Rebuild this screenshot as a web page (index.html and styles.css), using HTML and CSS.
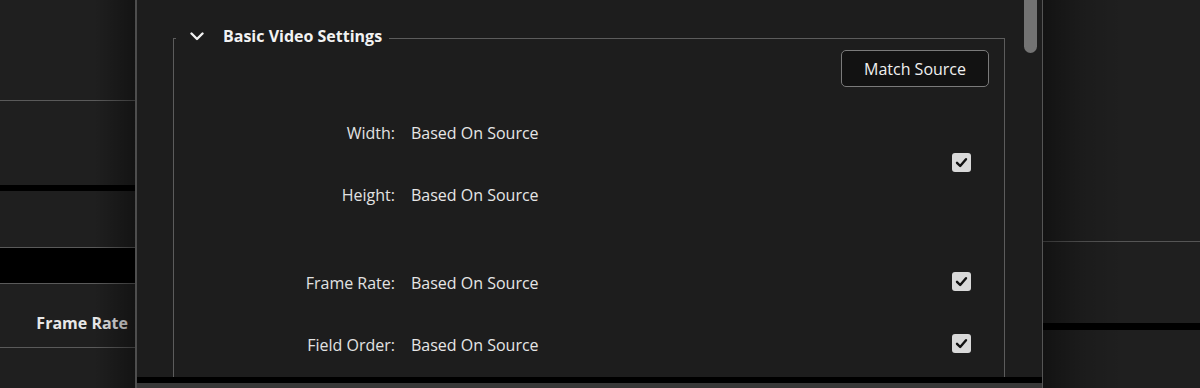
FILE: index.html
```html
<!DOCTYPE html>
<html lang="en">
<head>
  <meta charset="UTF-8">
  <title>Export Settings - Video</title>
  <link rel="stylesheet" href="styles.css">
</head>
<body>
  <div class="app">
    <aside class="side side-left">
      <div class="cell c1"></div>
      <div class="cell c2"></div>
      <div class="cell c3"></div>
      <div class="cell c4"></div>
      <div class="cell c5"><span class="side-label">Frame Rate</span></div>
      <div class="cell c6"></div>
    </aside>

    <section class="dialog">
      <div class="dialog-body">
        <div class="dialog-content">
          <fieldset class="group">
            <legend class="group-title">
              <svg class="chevron" width="14" height="9" viewBox="0 0 14 9">
                <polyline points="1.5,1.5 7,7 12.5,1.5" fill="none" stroke="#f2f2f2" stroke-width="2.4" stroke-linecap="round" stroke-linejoin="round"/>
              </svg>
              <span>Basic Video Settings</span>
            </legend>

            <div class="actions">
              <button type="button" class="btn">Match Source</button>
            </div>

            <div class="rows">
              <span class="lbl">Width:</span>
              <span class="val">Based On Source</span>
              <span class="check span2">
                <svg width="19" height="19" viewBox="0 0 19 19"><polyline points="5,9.8 8.2,13 14,6.2" fill="none" stroke="#111" stroke-width="2.4" stroke-linecap="round" stroke-linejoin="round"/></svg>
              </span>
              <span class="lbl">Height:</span>
              <span class="val">Based On Source</span>
            </div>

            <div class="rows rows-2">
              <span class="lbl">Frame Rate:</span>
              <span class="val">Based On Source</span>
              <span class="check">
                <svg width="19" height="19" viewBox="0 0 19 19"><polyline points="5,9.8 8.2,13 14,6.2" fill="none" stroke="#111" stroke-width="2.4" stroke-linecap="round" stroke-linejoin="round"/></svg>
              </span>
              <span class="lbl">Field Order:</span>
              <span class="val">Based On Source</span>
              <span class="check">
                <svg width="19" height="19" viewBox="0 0 19 19"><polyline points="5,9.8 8.2,13 14,6.2" fill="none" stroke="#111" stroke-width="2.4" stroke-linecap="round" stroke-linejoin="round"/></svg>
              </span>
            </div>
          </fieldset>
        </div>
        <div class="scrollbar"><div class="thumb"></div></div>
      </div>
      <div class="dialog-foot"></div>
    </section>

    <aside class="side side-right">
      <div class="cell r1"></div>
      <div class="cell r2"></div>
      <div class="cell r3"></div>
    </aside>
  </div>
</body>
</html>
```
FILE: styles.css
```css
body {
  margin: 0;
  background: #1f1f1f;
  color: #e6e6e6;
  font-family: "Open Sans", sans-serif;
  font-size: 16px;
  line-height: 22px;
}
.app {
  display: flex;
  height: 388px;
  overflow: hidden;
}

/* side panels behind the dialog */
.side {
  position: relative;
  display: flex;
  flex-direction: column;
  background: #1f1f1f;
}
.side::after {
  content: "";
  position: absolute;
  inset: 0;
  pointer-events: none;
}
.side-left {
  width: 135px;
  flex: none;
}
.side-left::after {
  background: linear-gradient(to right, rgba(0,0,0,0) 70%, rgba(0,0,0,0.38) 100%);
}
.side-right {
  flex: 1;
}
.side-right::after {
  background: linear-gradient(to right, rgba(0,0,0,0.4) 0, rgba(0,0,0,0.12) 40px, rgba(0,0,0,0) 80px);
}
.cell { flex: none; }
.c1 { height: 100px; border-bottom: 1px solid #5a5a5a; }
.c2 { height: 84px; border-bottom: 6px solid #000; }
.c3 { height: 56px; border-bottom: 1px solid #5a5a5a; }
.c4 { height: 35px; background: #000; border-bottom: 1px solid #5a5a5a; }
.c5 {
  height: 64px;
  box-sizing: border-box;
  border-bottom: 1px solid #5a5a5a;
  display: flex;
  justify-content: flex-end;
  padding: 28px 7px 0 0;
}
.c6 { flex: 1; }
.side-label {
  font-weight: 700;
  color: #e8e8e8;
}
.r1 { height: 241px; border-bottom: 1px solid #555; }
.r2 { height: 81px; border-bottom: 7px solid #000; }
.r3 { flex: 1; }

/* dialog */
.dialog {
  width: 905px;
  flex: none;
  display: flex;
  flex-direction: column;
  background: #1d1d1d;
  border-left: 2px solid #4e4e4e;
  border-right: 1px solid #555;
}
.dialog-body {
  height: 377px;
  display: flex;
  overflow: hidden;
}
.dialog-foot {
  flex: 1;
  background: #383838;
  border-top: 6px solid #000;
}
.dialog-content {
  flex: 1;
  padding: 25px 19px 0 36px;
}
.scrollbar {
  width: 13px;
  margin-right: 5px;
}
.thumb {
  height: 53px;
  background: #737373;
  border-radius: 0 0 7px 7px;
}

/* settings group */
.group {
  margin: 0;
  padding: 0 0 40px;
  border: 1px solid #5c5c5c;
}
.group-title {
  display: flex;
  align-items: center;
  margin-left: 2px;
  padding: 0 7px 4px 14px;
  font-weight: 700;
  color: #f2f2f2;
}
.chevron {
  margin-right: 19px;
}
.actions {
  display: flex;
  justify-content: flex-end;
  margin-top: -1px;
  padding-right: 15px;
}
.btn {
  height: 37px;
  padding: 0 22px;
  background: #121212;
  border: 1px solid #7a7a7a;
  border-radius: 5px;
  color: #f0f0f0;
  font-family: inherit;
  font-size: 16px;
}
.rows {
  display: grid;
  grid-template-columns: 221px 1fr 19px;
  grid-auto-rows: 62px;
  column-gap: 16px;
  align-items: center;
  margin-top: 15px;
  padding-right: 33px;
}
.rows-2 {
  margin-top: 26px;
}
.lbl {
  text-align: right;
  color: #e2e2e2;
}
.val {
  color: #e6e6e6;
}
.check {
  width: 19px;
  height: 19px;
  background: #d9d9d9;
  border-radius: 3px;
  margin-bottom: 4px;
}
.check svg { display: block; }
.span2 {
  grid-row: span 2;
}
```
